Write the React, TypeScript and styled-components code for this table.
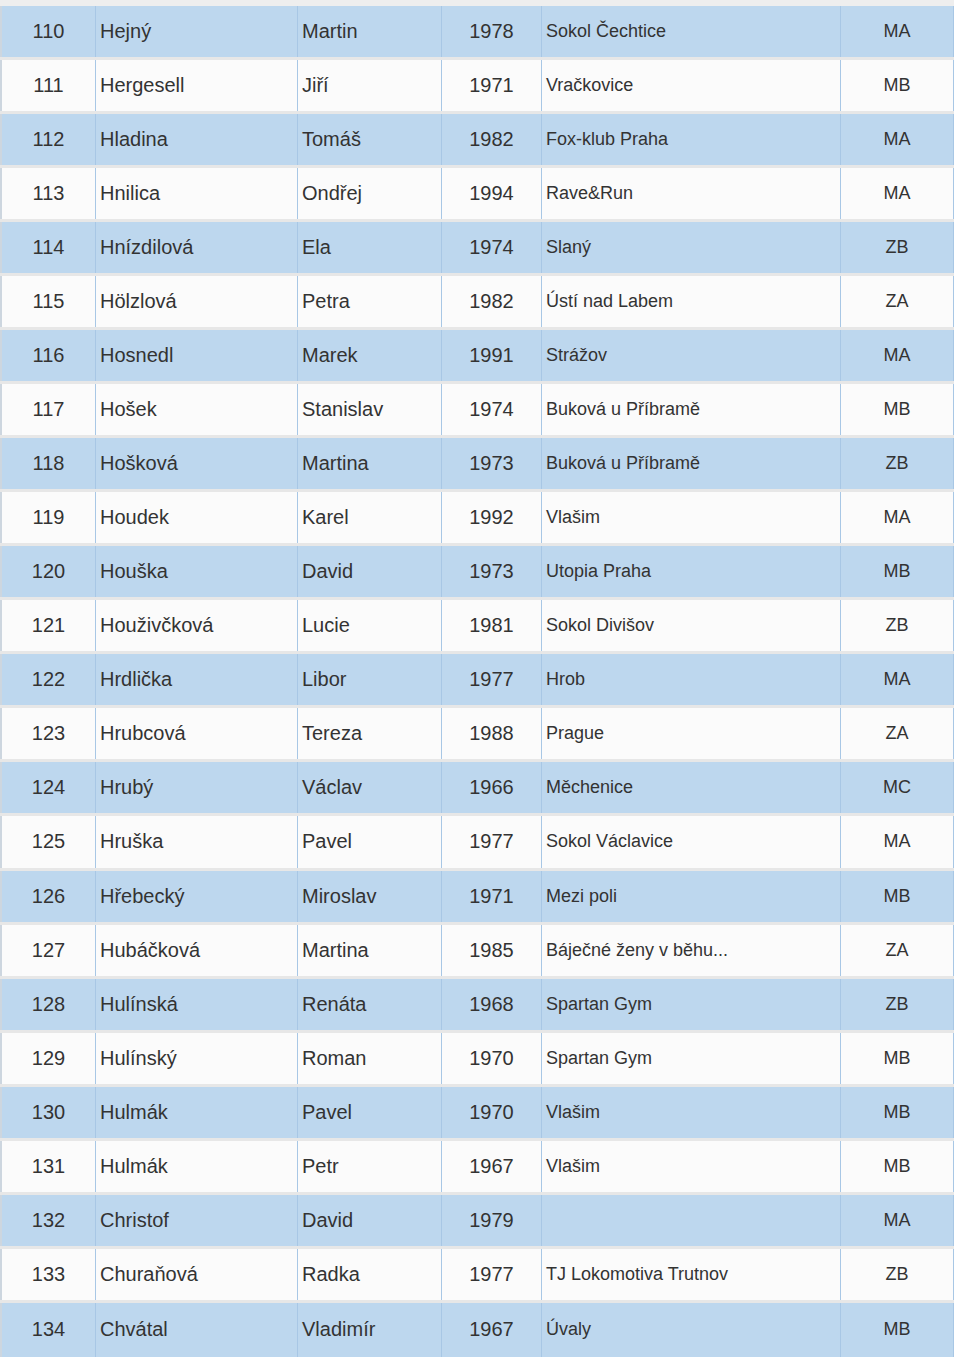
import React from "react";
import styled, { createGlobalStyle } from "styled-components";

const Global = createGlobalStyle`
  html, body { margin: 0; padding: 0; background: #ffffff; }
  body { font-family: "Liberation Sans", Arial, sans-serif; color: #333333; }
`;

type Row = [number, string, string, number, string, string];

const rows: Row[] = [
  [110, "Hejný", "Martin", 1978, "Sokol Čechtice", "MA"],
  [111, "Hergesell", "Jiří", 1971, "Vračkovice", "MB"],
  [112, "Hladina", "Tomáš", 1982, "Fox-klub Praha", "MA"],
  [113, "Hnilica", "Ondřej", 1994, "Rave&Run", "MA"],
  [114, "Hnízdilová", "Ela", 1974, "Slaný", "ZB"],
  [115, "Hölzlová", "Petra", 1982, "Ústí nad Labem", "ZA"],
  [116, "Hosnedl", "Marek", 1991, "Strážov", "MA"],
  [117, "Hošek", "Stanislav", 1974, "Buková u Příbramě", "MB"],
  [118, "Hošková", "Martina", 1973, "Buková u Příbramě", "ZB"],
  [119, "Houdek", "Karel", 1992, "Vlašim", "MA"],
  [120, "Houška", "David", 1973, "Utopia Praha", "MB"],
  [121, "Houživčková", "Lucie", 1981, "Sokol Divišov", "ZB"],
  [122, "Hrdlička", "Libor", 1977, "Hrob", "MA"],
  [123, "Hrubcová", "Tereza", 1988, "Prague", "ZA"],
  [124, "Hrubý", "Václav", 1966, "Měchenice", "MC"],
  [125, "Hruška", "Pavel", 1977, "Sokol Václavice", "MA"],
  [126, "Hřebecký", "Miroslav", 1971, "Mezi poli", "MB"],
  [127, "Hubáčková", "Martina", 1985, "Báječné ženy v běhu...", "ZA"],
  [128, "Hulínská", "Renáta", 1968, "Spartan Gym", "ZB"],
  [129, "Hulínský", "Roman", 1970, "Spartan Gym", "MB"],
  [130, "Hulmák", "Pavel", 1970, "Vlašim", "MB"],
  [131, "Hulmák", "Petr", 1967, "Vlašim", "MB"],
  [132, "Christof", "David", 1979, "", "MA"],
  [133, "Churaňová", "Radka", 1977, "TJ Lokomotiva Trutnov", "ZB"],
  [134, "Chvátal", "Vladimír", 1967, "Úvaly", "MB"],
];

const Table = styled.div`
  width: 954px;
  padding-top: 6px;
  background: #eeeeee;
  display: flex;
  flex-direction: column;
`;

const TableRow = styled.div<{ $alt: boolean; $last: boolean }>`
  display: grid;
  grid-template-columns: 2px 94px 202px 144px 100px 299px 113px;
  height: ${(p) => (p.$last ? "54px" : "54.04px")};
  box-sizing: border-box;
  border-bottom: ${(p) => (p.$last ? "0" : "3px solid #e7e7e7")};
  background: ${(p) => (p.$alt ? "#fbfbfb" : "#bdd7ee")};
`;

const Edge = styled.div`
  background: #cdd6df;
`;

const Cell = styled.div<{ $align: "left" | "center"; $size: number }>`
  display: flex;
  align-items: center;
  justify-content: ${(p) => (p.$align === "center" ? "center" : "flex-start")};
  padding-left: ${(p) => (p.$align === "left" ? "4px" : "0")};
  border-right: 1px solid #a8c7e5;
  font-size: ${(p) => p.$size}px;
  white-space: nowrap;
  overflow: hidden;
  color: #333333;
`;

export default function App() {
  return (
    <>
      <Global />
      <Table>
        {rows.map((r, i) => (
          <TableRow key={r[0]} $alt={i % 2 === 1} $last={i === rows.length - 1}>
            <Edge />
            <Cell $align="center" $size={20}>{r[0]}</Cell>
            <Cell $align="left" $size={20}>{r[1]}</Cell>
            <Cell $align="left" $size={20}>{r[2]}</Cell>
            <Cell $align="center" $size={20}>{r[3]}</Cell>
            <Cell $align="left" $size={18}>{r[4]}</Cell>
            <Cell $align="center" $size={18}>{r[5]}</Cell>
          </TableRow>
        ))}
      </Table>
    </>
  );
}
